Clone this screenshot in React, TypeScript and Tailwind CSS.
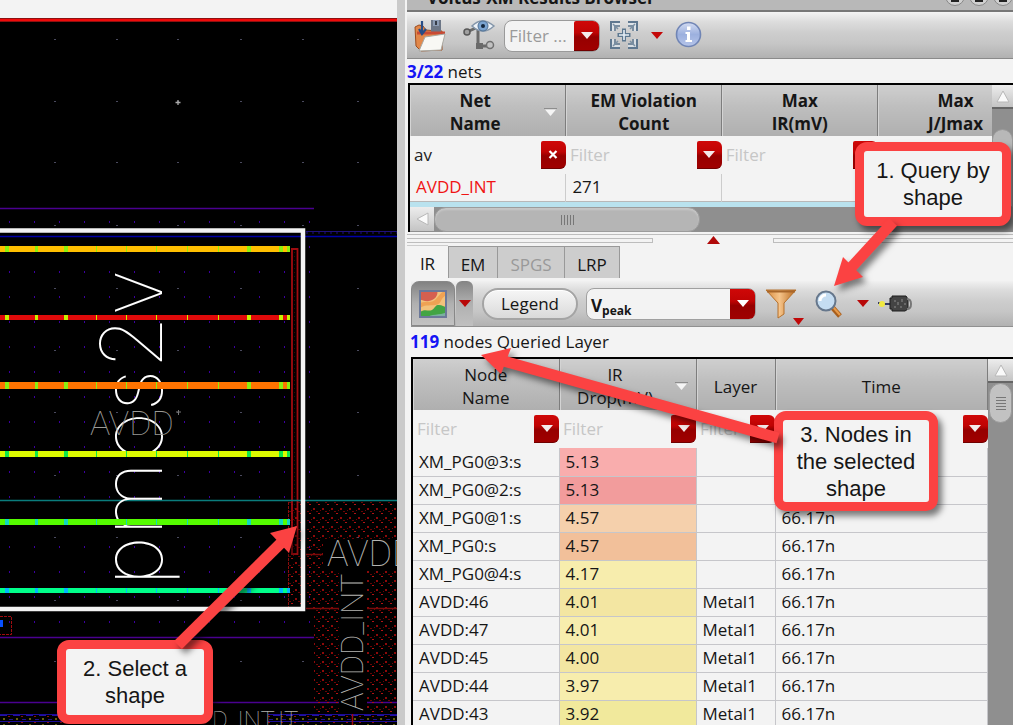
import React from "react";

const ui = "font-['Open_Sans','Noto_Sans',sans-serif]";
const bar = "bg-[linear-gradient(to_bottom,#f1f1f1_0%,#dcdcdc_20%,#cdcdcd_45%,#c6c6c6_68%,#b1b1b1_100%)]";
const head = "bg-[linear-gradient(to_bottom,#cfcfcf_0%,#bfbfbf_40%,#afafaf_100%)]";
const red = "bg-[linear-gradient(to_bottom,#cf0808_0%,#c00404_40%,#960000_55%,#a00000_100%)]";

const stripes = [
  { y: 246, h: 6, color: "#ffbf00", tick: "#8df20c" },
  { y: 315, h: 5, color: "#e00a0a", tick: "#c8f000" },
  { y: 382, h: 7, color: "#ff7300", tick: "#8cf010" },
  { y: 451, h: 6, color: "#dcfa00", tick: "#10e848" },
  { y: 519, h: 6, color: "#55fb00", tick: "#10d8c0" },
  { y: 588, h: 5, color: "#00ff8a", tick: "#00b8ff" },
];
const ticks = [
  [5, 4], [35, 3], [64, 4], [96, 1], [126, 1], [156, 1], [187, 1], [218, 1], [247, 4], [279, 4], [287, 3],
];

function LayoutCanvas() {
  return (
    <svg className="block" width="397" height="725" viewBox="0 0 397 725" role="img" aria-label="Layout view">
      <defs>
        <pattern id="minor" x="9" y="221" width="25" height="25" patternUnits="userSpaceOnUse">
          <rect width="1" height="2" fill="#3c00a0" />
        </pattern>
        <pattern id="hatch" x="309" y="504" width="9" height="9" patternUnits="userSpaceOnUse">
          <rect width="2" height="1" fill="#b01414" />
          <rect x="4" y="4" width="2" height="2" fill="#8c0a0a" />
          <rect x="7" y="7" width="2" height="1" fill="#6a0404" />
          <rect x="2" y="6" width="1" height="1" fill="#6a0404" />
        </pattern>
        <pattern id="mesh" x="0" y="714" width="13" height="6" patternUnits="userSpaceOnUse">
          <rect y="1" width="7" height="1" fill="#2410a8" />
          <rect x="8" y="2" width="2" height="1" fill="#8a1010" />
          <rect x="3" y="4" width="2" height="2" fill="#66600e" />
          <rect x="9" y="5" width="4" height="1" fill="#20108c" />
        </pattern>
      </defs>
      <rect width="397" height="725" fill="#000" />
      <rect width="397" height="19" fill="#f3f3f3" />
      <rect y="18" width="397" height="4" fill="#8e1010" />
      <rect y="19" width="397" height="2" fill="#f00a0a" />
      {[39, 101, 162, 225, 288, 350, 412, 475, 537, 600, 661].map((y) =>
        [54, 116, 177, 240, 302, 357].map((x) => (
          <rect key={`${x}-${y}`} x={x} y={y} width="2" height="1" fill="#4a4a5e" />
        )),
      )}
      <path d="M175.5 102.500h5M178 100v5" stroke="#aaa" strokeWidth="1.300" />
      <rect y="221" width="314" height="410" fill="url(#minor)" />
      <path d="M0 208.500H314" stroke="#4a0090" strokeWidth="1.500" />
      <path d="M0 236.500H397" stroke="#0000a8" strokeWidth="1.500" />
      <path d="M306 231.500H397" stroke="#20107a" strokeWidth="1" />
      <path d="M306 233H397" stroke="#1c0c80" strokeWidth="1" strokeDasharray="2 4" />
      <path d="M0 637.500H314M0 702.500H397" stroke="#4a0090" strokeWidth="1.500" />

      <rect x="306" y="502" width="91" height="106" fill="url(#hatch)" />
      <rect x="314" y="608" width="83" height="106" fill="url(#hatch)" />
      <rect x="288" y="502" width="13" height="105" fill="url(#hatch)" />
      <path d="M288.500 502V607" stroke="#8a0c0c" strokeDasharray="3 1" />
      <path d="M306 554.500H323M306 608.500H397" stroke="#7a0a0a" strokeWidth="1.500" />
      <path d="M292 248V555M297.500 248V555M291 249H298M291 554H298" stroke="#a00c10" strokeWidth="1.800" fill="none" />
      <path d="M294.500 252V552" stroke="#6a0000" strokeWidth="1" strokeDasharray="1 3" opacity=".6" />
      <path d="M0 500.500H397" stroke="#0a7c7c" strokeWidth="1.500" />
      <rect x="323" y="539" width="74" height="32" fill="#000" />
      <rect x="339" y="571" width="28" height="142" fill="#000" />

      <path d="M0 616.500H11.500V634.500H0" stroke="#a00c10" fill="none" strokeDasharray="3 1" />
      <rect y="620" width="3" height="7" fill="#0850ff" />
      <rect y="714" width="66" height="11" fill="url(#mesh)" />
      <rect x="268" y="714" width="129" height="11" fill="url(#mesh)" />
      <path d="M0 714.500H66M0 721.500H66M268 714.500H397M268 721.500H397" stroke="#1c0c98" />
      <path d="M352.500 714V725" stroke="#a00c10" strokeWidth="1.500" />

      <text transform="translate(162 586) rotate(-90)" fontSize="86" fontWeight="100" fill="#fff" className="font-[Inter,Roboto,sans-serif]">
        pmos2v
      </text>
      <g fill="#b4b4b0" fontWeight="100" className="font-[Roboto,sans-serif]">
        <text x="90" y="435" fontSize="34" fill="#9a9a96">AVDD</text>
        <text x="327" y="566" fontSize="36">AVDD</text>
        <text transform="translate(363 711) rotate(-90)" fontSize="31">AVDD_INT</text>
        <text x="212" y="728" fontSize="24">D_INT</text>
        <text x="278" y="728" fontSize="24">IT</text>
      </g>
      <path d="M176 412h5M178.500 410v5" stroke="#777" />

      {stripes.map((s) => (
        <g key={s.y}>
          <rect y={s.y} width="289" height={s.h} fill={s.color} />
          {ticks.map(([x, w]) => (
            <rect key={x} x={x} y={s.y} width={w} height={s.h} fill={s.tick} />
          ))}
        </g>
      ))}
      <path d="M-5 230.500H303V609H-5" stroke="#f3f3f3" strokeWidth="4.500" fill="none" />
    </svg>
  );
}

function Caret({ className = "" }: { className?: string }) {
  return (
    <svg width="12" height="7" viewBox="0 0 12 7" className={className} aria-hidden="true">
      <path d="M0 0H12L6 7Z" fill="currentColor" />
    </svg>
  );
}

function DropButton({ label, clear = false, className = "" }: { label: string; clear?: boolean; className?: string }) {
  return (
    <button aria-label={label} className={`flex h-7 w-[25px] shrink-0 items-center justify-center rounded-r-md rounded-tl-xs border-b border-[#700000] text-white ${red} ${className}`}>
      {clear ? (
        <svg width="10" height="9" viewBox="0 0 10 9" aria-hidden="true">
          <path d="M1.500 1L8.500 8M8.500 1L1.500 8" stroke="#fff" strokeWidth="2.200" />
        </svg>
      ) : (
        <Caret className="text-[#f4eaea]" />
      )}
    </button>
  );
}

function FilterCell({ name, value = "", clear = false }: { name: string; value?: string; clear?: boolean }) {
  return (
    <td className="h-[38px] p-0">
      <div className="flex items-center">
        <input
          aria-label={`Filter ${name}`}
          placeholder="Filter"
          defaultValue={value}
          className="w-full min-w-0 flex-1 bg-transparent pl-1 text-[17px] text-[#222] outline-none placeholder:text-[#c6c6c6]"
        />
        <DropButton clear={clear} label={clear ? `Clear ${name} filter` : `${name} filter options`} />
      </div>
    </td>
  );
}

function SortMark() {
  return (
    <svg width="13" height="9" viewBox="0 0 13 9" aria-hidden="true">
      <path d="M1 1.500H12L6.500 8Z" fill="#f5f5f5" />
      <path d="M0 .5H13" stroke="#8d8d8d" />
    </svg>
  );
}

function Th({ a, b, sort = false, bold = false }: { a: string; b?: string; sort?: boolean; bold?: boolean }) {
  return (
    <th className={`h-[51px] border-r border-[#7d7d7d] p-0 pt-[3px] leading-[23px] shadow-[inset_1px_0_0_#d4d4d4] ${head} ${bold ? "font-bold" : "font-normal"}`}>
      <div className="flex items-center">
        <span className="flex-1">
          {a}
          {b && <br />}
          {b}
        </span>
        {sort && (
          <span className="pr-2 pl-1">
            <SortMark />
          </span>
        )}
      </div>
    </th>
  );
}

const rows = [
  ["XM_PG0@3:s", "5.13", "", "", "bg-[#f9adad]"],
  ["XM_PG0@2:s", "5.13", "", "", "bg-[#f29c9c]"],
  ["XM_PG0@1:s", "4.57", "", "66.17n", "bg-[#f5d0ac]"],
  ["XM_PG0:s", "4.57", "", "66.17n", "bg-[#f2c09a]"],
  ["XM_PG0@4:s", "4.17", "", "66.17n", "bg-[#f7edad]"],
  ["AVDD:46", "4.01", "Metal1", "66.17n", "bg-[#f3e6a2]"],
  ["AVDD:47", "4.01", "Metal1", "66.17n", "bg-[#f7edad]"],
  ["AVDD:45", "4.00", "Metal1", "66.17n", "bg-[#f3e6a2]"],
  ["AVDD:44", "3.97", "Metal1", "66.17n", "bg-[#f7edad]"],
  ["AVDD:43", "3.92", "Metal1", "66.17n", "bg-[#f1e99c]"],
];

function ScrollArrow({ left = false }: { left?: boolean }) {
  return (
    <button aria-label={left ? "Scroll left" : "Scroll up"} className={`flex shrink-0 items-center justify-center bg-[linear-gradient(to_bottom,#ededed,#c4c4c4)] ${left ? "h-6 w-6" : "h-6 w-full border-b-2 border-[#666]"}`}>
      <svg width="14" height="14" viewBox="0 0 14 14" aria-hidden="true">
        <path d={left ? "M13 1V13L2 7Z" : "M1 13H13L7 2Z"} fill="#fafafa" stroke="#b8b8b8" />
      </svg>
    </button>
  );
}

function NetsToolbar() {
  return (
    <div className={`flex h-[46px] items-center border-b border-[#8a8a8a] pl-[7px] ${bar}`}>
      <button aria-label="Open results" className="h-[34px] w-[34px]">
        <svg width="34" height="34" viewBox="0 0 34 34">
          <path d="M1 8L5 6L9 7L12 11L24 12L28 12V31L7 32L2 27Z" fill="#e2884a" stroke="#9a4c20" />
          <path d="M17 1H27V13H17Z" fill="#6c7686" />
          <path d="M19 1H25V7H19Z" fill="#8c9cb4" />
          <path d="M22 2V6" stroke="#353c48" strokeWidth="2" />
          <path d="M3 14H31" stroke="#c84a34" strokeWidth="3" />
          <path d="M11 18L31 15L27 31L5 32Z" fill="#f8f8f4" stroke="#a8a8a2" />
          <path d="M8 2V14M5 10L8 15L12 10" stroke="#284d86" strokeWidth="2.200" fill="none" />
        </svg>
      </button>
      <button aria-label="Trace net" className="ml-[14px] h-[34px] w-[34px]">
        <svg width="34" height="34" viewBox="0 0 34 34">
          <path d="M5 13L16 8V27H28" stroke="#6a6a6a" strokeWidth="3" fill="none" />
          <circle cx="5" cy="13" r="3" fill="#a0a0a0" stroke="#585858" strokeWidth="1.500" />
          <circle cx="28" cy="26" r="3.500" fill="#c2c2c2" stroke="#707070" strokeWidth="1.500" />
          <rect x="14" y="24" width="7" height="6" fill="#6a6a6a" />
          <path d="M10 7Q20 -3 32 7Q21 17 10 7Z" fill="#eef3f8" stroke="#8496aa" strokeWidth="1.500" />
          <circle cx="21" cy="7" r="5" fill="#7ba4d0" stroke="#4f7094" />
          <circle cx="21" cy="7" r="2" fill="#13263c" />
        </svg>
      </button>
      <div className="ml-2 flex h-8 w-24 items-center rounded-lg border border-[#9a9a9a] bg-[#f3f3f3]">
        <input aria-label="Filter nets" placeholder="Filter ..." className="w-0 min-w-0 flex-1 bg-transparent pl-1 text-[17px] outline-none placeholder:text-[#9a9a9a]" />
        <DropButton label="Net filter presets" className="h-[30px]" />
      </div>
      <button aria-label="Fit to selection" className="ml-[10px] h-[30px] w-[28px] pb-[2px]">
        <svg width="28" height="28" viewBox="0 0 28 28" fill="none">
          <path d="M1 10V1H10M18 1H27V10M27 18V27H18M10 27H1V18" stroke="#5f7890" strokeWidth="2" />
          <path d="M3 10V3H10M18 3H25V10M25 18V25H18M10 25H3V18" stroke="#dfe7ee" strokeWidth="1.500" />
          <path d="M5 10V5H10M18 5H23V10M23 18V23H18M10 23H5V18" stroke="#5f7890" strokeWidth="1.500" />
          <path d="M3 3L8 8M25 3L20 8M3 25L8 20M25 25L20 20" stroke="#7a90a4" strokeWidth="1.500" />
          <path d="M14 7.500V20.500M7.500 14H20.500" stroke="#5d7890" strokeWidth="4" />
          <path d="M14 9V19M9 14H19" stroke="#e6eef5" strokeWidth="1.600" />
        </svg>
      </button>
      <button aria-label="Fit options" className="ml-[13px] text-[#c40808]">
        <Caret />
      </button>
      <button aria-label="Information" className="ml-3 h-[29px] w-[27px] pb-[2px]">
        <svg width="27" height="27" viewBox="0 0 27 27">
          <defs>
            <linearGradient id="info" x1="0" y1="0" x2="0" y2="1">
              <stop offset="0" stopColor="#d3dcf2" />
              <stop offset=".5" stopColor="#9cb0de" />
              <stop offset="1" stopColor="#b6c5ea" />
            </linearGradient>
          </defs>
          <circle cx="13.500" cy="13.500" r="12" fill="url(#info)" stroke="#7085b5" strokeWidth="1.600" />
          <path d="M10.500 11H15V19H17V21H10.500V19H12V13H10.500ZM12 5.500H15.500V9H12Z" fill="#fff" />
        </svg>
      </button>
    </div>
  );
}

function NodesToolbar() {
  return (
    <div className={`ml-1 flex h-[46px] items-center border-b border-[#909090] ${bar}`}>
      <div className="flex h-full gap-px">
        <button aria-label="IR drop map" aria-pressed="true" className="flex h-full w-[44px] items-center justify-center rounded-t-lg border border-[#888] bg-[linear-gradient(to_bottom,#828282,#b0b0b0_50%,#c2c2c2)]">
          <svg width="28" height="28" viewBox="0 0 28 28">
            <rect width="28" height="28" fill="#f2c27c" />
            <path d="M0 0H18C20 6 15 10 10 11C5 12 3 9 0 10Z" fill="#d66050" />
            <path d="M28 5C20 8 24 14 16 15C10 16 5 14 0 19V14C5 10 10 14 16 10C20 6 22 1 28 1Z" fill="#efa254" />
            <path d="M0 23C6 18 9 22 13 20C17 17 16 15 20 15C23 15 25 17 28 17V28H0Z" fill="#42a444" />
            <path d="M8 28C12 23 20 26 28 22V28Z" fill="#7ab0a0" />
            <rect x="1" y="1" width="26" height="26" fill="none" stroke="#6b7899" strokeWidth="2" />
          </svg>
        </button>
        <button aria-label="Map options" className="flex h-full w-[17px] items-center justify-center rounded-t-md bg-[linear-gradient(to_bottom,#848484,#b0b0b0_50%,#c0c0c0)] text-[#b80808]">
          <Caret />
        </button>
      </div>
      <button className="ml-[9px] h-8 w-24 rounded-2xl border-2 border-[#a4a4a4] bg-[linear-gradient(to_bottom,#f6f6f6,#dadada)] text-[17px] shadow-[inset_0_1px_0_#fff]">Legend</button>
      <div className="ml-2 grid h-8 w-[170px] rounded-lg border border-[#a0a0a0] bg-[#f3f3f3]">
        <div aria-hidden="true" className="col-start-1 row-start-1 flex items-center justify-between pl-1">
          <span className="pt-1 font-bold">
            V<sub className="text-xs">peak</sub>
          </span>
          <span className={`flex h-[30px] w-[25px] items-center justify-center rounded-r-md ${red}`}>
            <Caret className="text-white" />
          </span>
        </div>
        <select aria-label="Voltage measure" className="col-start-1 row-start-1 w-full appearance-none bg-transparent text-transparent outline-none">
          <option>Vpeak</option>
        </select>
      </div>
      <button aria-label="Filter nodes" className="ml-2 flex h-[42px] w-[40px] items-end">
        <svg width="40" height="38" viewBox="0 0 40 38">
          <defs>
            <linearGradient id="funnel" x1="0" y1="0" x2="1" y2="0">
              <stop offset="0" stopColor="#d88a3c" />
              <stop offset=".45" stopColor="#f6c48a" />
              <stop offset="1" stopColor="#b8681c" />
            </linearGradient>
          </defs>
          <path d="M2 3H32L20 16V27L14 31V16Z" fill="url(#funnel)" stroke="#b5712c" />
          <path d="M3 4.500H31" stroke="#a8662a" strokeWidth="2" />
          <path d="M29 31H40L34.500 38Z" fill="#c00808" />
        </svg>
      </button>
      <button aria-label="Query by shape" className="ml-[11px] h-[30px] w-[30px]">
        <svg width="30" height="30" viewBox="0 0 30 30">
          <path d="M17 18L25 27" stroke="#a85e1c" strokeWidth="5" />
          <path d="M18 18L25 26" stroke="#e89a48" strokeWidth="2" />
          <circle cx="11" cy="12" r="9.500" fill="#c5ddf2" stroke="#66778c" strokeWidth="2" />
          <path d="M5 12A6 6 0 0 1 11 6" stroke="#fff" strokeWidth="3" fill="none" />
        </svg>
      </button>
      <button aria-label="Query options" className="ml-3 text-[#b80808]">
        <Caret />
      </button>
      <button aria-label="Probe" className="ml-[9px] h-[22px] w-[36px]">
        <svg width="36" height="22" viewBox="0 0 36 22">
          <path d="M0 10H4M6 11H15" stroke="#333a66" strokeWidth="2" />
          <circle cx="4" cy="11" r="3" fill="#f0e840" />
          <path d="M12 5H14V3H28L30 6V16L27 18H14V16H12Z" fill="#444" stroke="#1c1c1c" />
          <path d="M17 7V9M20 9V12M17 13V15M24 6V9M27 10V12M23 13V15" stroke="#8c8c8c" fill="none" />
          <path d="M29 6Q33 6 33 11Q33 16 29 16" fill="none" stroke="#777" strokeWidth="2" />
        </svg>
      </button>
    </div>
  );
}

function Callout({ className, children }: { className: string; children: React.ReactNode }) {
  return (
    <div className={`absolute flex items-center justify-center rounded-xl border-[9px] border-[#fb4242] bg-[#f3f3f3] text-center font-['Liberation_Sans',Arial,sans-serif] text-[22px] leading-[27px] text-[#161616] shadow-[4px_5px_6px_rgba(0,0,0,0.5)] ${className}`}>
      {children}
    </div>
  );
}

export default function App() {
  return (
    <div className={`relative flex h-screen overflow-hidden bg-[#f3f3f3] text-[17px] leading-6 text-[#161616] ${ui}`}>
      <section className="shrink-0">
        <LayoutCanvas />
      </section>
      <div className="w-2 shrink-0 bg-[#cacaca]" />
      <main className="ml-[2px] flex min-w-0 flex-1 flex-col">
        <header className="flex h-3 shrink-0 items-end justify-between overflow-hidden border-b-2 border-[#777] bg-[#b8b8b8] pl-5 font-bold">
          <h1 className="leading-6">Voltus-XM Results Browser</h1>
          <div className="flex gap-1 pb-1">
            {["Detach", "Maximize", "Close"].map((l) => (
              <button key={l} aria-label={l} className="flex h-5 w-5 items-end justify-center rounded-full border border-[#888] bg-[#d0d0d0] pb-[3px]">
                <span className="h-[3px] w-2 bg-[#222]" />
              </button>
            ))}
          </div>
        </header>
        <div className="mt-px shrink-0">
          <NetsToolbar />
        </div>
        <p className="h-6 shrink-0 leading-[26px]">
          <b className="text-[#1414f5]">3/22</b> nets
        </p>

        <section aria-label="Nets" className="ml-px shrink-0 border-t-2 border-l-2 border-black">
          <div className="flex h-[122px]">
            <div className="min-w-0 flex-1 overflow-hidden">
              <table className="w-[624px] table-fixed border-collapse">
                <thead>
                  <tr>
                    <Th a="Net" b="Name" sort bold />
                    <Th a="EM Violation" b="Count" bold />
                    <Th a="Max" b="IR(mV)" bold />
                    <Th a="Max" b="J/Jmax" bold />
                  </tr>
                </thead>
                <tbody>
                  <tr>
                    <FilterCell name="net name" value="av" clear />
                    <FilterCell name="violation count" />
                    <FilterCell name="max IR" />
                    <FilterCell name="max J" />
                  </tr>
                  <tr className="h-[27px] border-b border-[#b8b8b8] leading-6">
                    <td className="border-r border-[#ccc] p-0 pl-[6px] text-[#f01414]">AVDD_INT</td>
                    <td className="border-r border-[#ccc] p-0 pl-[6px]">271</td>
                    <td className="border-r border-[#ccc] p-0" />
                    <td className="p-0" />
                  </tr>
                  <tr className="h-6 bg-[#b9e2ee]">
                    <td colSpan={4} className="p-0" />
                  </tr>
                </tbody>
              </table>
            </div>
            <div className="flex w-[21px] shrink-0 flex-col bg-[#8f8f8f]">
              <ScrollArrow />
              <div className="mt-5 flex-1 rounded-t-xl border border-[#999] bg-[#b8b8b8]" />
            </div>
          </div>
          <div className="flex h-[25px] bg-[#8f8f8f]">
            <ScrollArrow left />
            <div className="flex w-[266px] items-center justify-center gap-[2px] rounded-xl border border-[#9c9c9c] bg-[#b5b5b5] shadow-[inset_0_2px_2px_#c8c8c8]">
              {[0, 1, 2, 3, 4].map((i) => (
                <i key={i} className="h-[10px] w-px bg-[#777]" />
              ))}
            </div>
          </div>
        </section>

        <div className="mt-[2px] flex h-[11px] shrink-0 items-center justify-between border-t border-[#bdbdbd]">
          <span className="h-[5px] w-[246px] border-y border-r border-[#bdbdbd]" />
          <svg width="13" height="8" viewBox="0 0 13 8" aria-hidden="true">
            <path d="M6.500 0L13 8H0Z" fill="#b00808" />
          </svg>
          <span className="h-[5px] w-[240px] border-y border-l border-[#bdbdbd]" />
        </div>

        <div role="tablist" className="flex h-[33px] shrink-0 items-end">
          <button role="tab" aria-selected="true" className="h-full w-[41px] border-t border-[#ccc] bg-[#f3f3f3] pt-1">IR</button>
          <button role="tab" className="h-8 w-[50px] border border-b-0 border-[#999] bg-[#cdcdcd] pt-1">EM</button>
          <button role="tab" disabled className="h-8 w-[67px] border-t border-r border-[#999] bg-[#cdcdcd] pt-1 text-[#999]">SPGS</button>
          <button role="tab" className="h-8 w-[55px] border-t border-r border-[#999] bg-[#cdcdcd] pt-1">LRP</button>
        </div>

        <div className="mt-[3px] shrink-0">
          <NodesToolbar />
        </div>
        <p className="ml-[3px] h-[30px] shrink-0 leading-[30px]">
          <b className="text-[#1414f5]">119</b> nodes Queried Layer
        </p>

        <section aria-label="Nodes" className="ml-1 flex min-h-0 flex-1 border-t-2 border-l-2 border-black">
          <div className="min-w-0 flex-1 overflow-hidden">
            <table className="w-full table-fixed border-collapse">
              <colgroup>
                <col className="w-[146px]" />
                <col className="w-[137px]" />
                <col className="w-[79px]" />
                <col />
              </colgroup>
              <thead>
                <tr>
                  <Th a="Node" b="Name" />
                  <Th a="IR" b="Drop(mV)" sort />
                  <Th a="Layer" />
                  <Th a="Time" />
                </tr>
              </thead>
              <tbody>
                <tr>
                  <FilterCell name="node name" />
                  <FilterCell name="IR drop" />
                  <FilterCell name="layer" />
                  <FilterCell name="time" />
                </tr>
                {rows.map(([name, drop, layer, time, tint]) => (
                  <tr key={name} className="h-7 border-b border-[#c6c6ca]">
                    <td className="border-r border-[#c6c6ca] p-0 pl-[6px]">{name}</td>
                    <td className={`border-r border-[#c6c6ca] p-0 pl-[6px] ${tint}`}>{drop}</td>
                    <td className="border-r border-[#c6c6ca] p-0 pl-[6px]">{layer}</td>
                    <td className="border-r border-[#c6c6ca] p-0 pl-[6px]">{time}</td>
                  </tr>
                ))}
              </tbody>
            </table>
          </div>
          <div className="flex w-[25px] shrink-0 flex-col bg-[#8f8f8f]">
            <ScrollArrow />
            <div className="mx-px flex h-10 flex-col items-center justify-center gap-[2px] rounded-xl border border-[#999] bg-[#c2c2c2]">
              {[0, 1, 2, 3, 4].map((i) => (
                <i key={i} className="h-px w-[10px] bg-[#777]" />
              ))}
            </div>
          </div>
        </section>
      </main>

      <Callout className="top-[411px] left-[774px] h-[100px] w-[164px]">
        3. Nodes in
        <br />
        the selected
        <br />
        shape
      </Callout>
      <Callout className="top-[142px] left-[855px] h-[84px] w-[156px]">
        1. Query by
        <br />
        shape
      </Callout>
      <Callout className="top-[640px] left-[57px] h-[84px] w-[156px]">
        2. Select a
        <br />
        shape
      </Callout>
      <svg className="pointer-events-none absolute top-0 left-0 drop-shadow-[4px_5px_3px_rgba(0,0,0,0.5)]" width="1013" height="725" viewBox="0 0 1013 725" aria-hidden="true">
        <g stroke="#fb4242" strokeWidth="11">
          <path d="M893 222L848 271" />
          <path d="M778 438L500 360" />
          <path d="M178 645L283 541" />
        </g>
        <g fill="#fb4242">
          <path d="M834 286L843 257L863 277Z" />
          <path d="M481 355L511 348L501 374Z" />
          <path d="M297 526L270 533L289 553Z" />
        </g>
      </svg>
    </div>
  );
}
